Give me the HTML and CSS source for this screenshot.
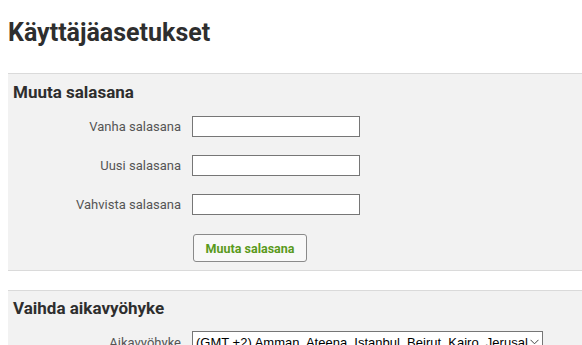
FILE: index.html
```html
<!DOCTYPE html>
<html lang="fi">
<head>
	<meta charset="UTF-8">
	<title>Käyttäjäasetukset</title>
	<link rel="stylesheet" href="styles.css">
</head>
<body>
<h1 class="page-title">Käyttäjäasetukset</h1>

<form class="panel">
	<h2>Muuta salasana</h2>
	<div class="row">
		<label for="old-pw">Vanha salasana</label>
		<input type="password" id="old-pw" class="field">
	</div>
	<div class="row">
		<label for="new-pw">Uusi salasana</label>
		<input type="password" id="new-pw" class="field">
	</div>
	<div class="row">
		<label for="check-pw">Vahvista salasana</label>
		<input type="password" id="check-pw" class="field">
	</div>
	<div class="row row-btn">
		<span></span>
		<button type="button" class="btn">Muuta salasana</button>
	</div>
</form>

<form class="panel panel-tz">
	<h2>Vaihda aikavyöhyke</h2>
	<div class="row">
		<label for="tz">Aikavyöhyke</label>
		<span class="select-wrap">
			<select id="tz" class="tz-select">
				<option>(GMT +2) Amman, Ateena, Istanbul, Beirut, Kairo, Jerusalem</option>
			</select>
			<svg class="chevron" width="9" height="6" viewBox="0 0 9 6"><path d="M0.5 0.8 L4.5 4.8 L8.5 0.8" fill="none" stroke="#444" stroke-width="1"/></svg>
		</span>
	</div>
</form>
</body>
</html>
```

FILE: styles.css
```css
html, body {
    margin: 0;
    background: #fff;
}

body {
    padding: 8px 0 0 8px;
    font-family: Roboto, "Liberation Sans", sans-serif;
    color: #333;
}

.page-title {
    margin: 11px 0 26px;
    font-size: 25px;
    line-height: 28px;
    font-weight: 700;
    color: #2e2e2e;
}

.panel {
    margin: 0;
    padding: 8px 5px 8px;
    background: #f2f2f2;
    border-top: 1px solid #dadada;
    border-bottom: 1px solid #dadada;
}

.panel h2 {
    margin: 0;
    font-size: 17px;
    line-height: 20px;
    font-weight: 700;
    color: #2e2e2e;
}

.panel-tz {
    margin-top: 19px;
    padding-top: 7px;
}

.row {
    display: grid;
    grid-template-columns: 168px auto;
    column-gap: 11px;
    align-items: center;
    margin-top: 18px;
}

.panel h2 + .row {
    margin-top: 14px;
}

.panel-tz h2 + .row {
    margin-top: 13px;
}

.row-btn {
    margin-top: 19px;
}

.row label {
    text-align: right;
    font-size: 13px;
    color: #555;
}

.field {
    box-sizing: border-box;
    width: 168px;
    height: 21px;
    margin: 0;
    padding: 1px 2px;
    border: 1px solid #767676;
    border-radius: 0;
    background: #fff;
}

.btn {
    justify-self: start;
    box-sizing: border-box;
    width: 114px;
    height: 28px;
    margin-left: 1px;
    padding: 0;
    font: 700 12.5px Roboto, "Liberation Sans", sans-serif;
    color: #5a9a1c;
    background: #f8f8f8;
    border: 1px solid #8a8a8a;
    border-radius: 3px;
}

.select-wrap {
    position: relative;
    justify-self: start;
    display: block;
    width: 351px;
}

.tz-select {
    -webkit-appearance: none;
    appearance: none;
    box-sizing: border-box;
    display: block;
    width: 351px;
    height: 22px;
    margin: 0;
    padding: 0 14px 0 3px;
    font: 13px "Liberation Sans", Arial, sans-serif;
    color: #000;
    background: #fff;
    border: 1px solid #767676;
    border-radius: 0;
}

.chevron {
    position: absolute;
    top: 8px;
    right: 4px;
}
```
